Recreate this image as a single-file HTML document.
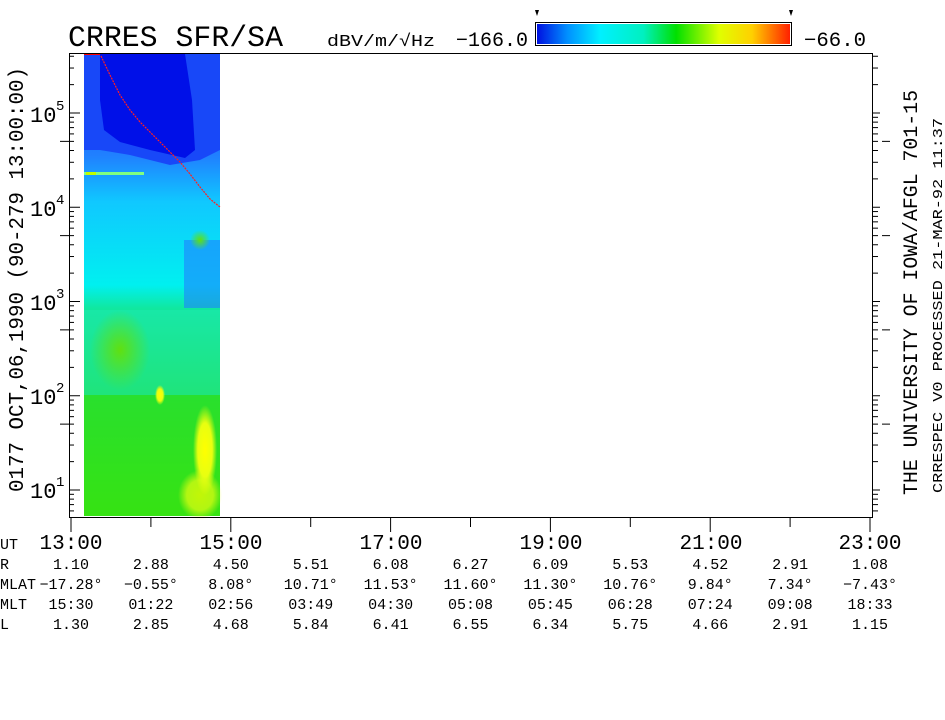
<!DOCTYPE html>
<html><head><meta charset="utf-8"><style>
html,body{margin:0;padding:0;background:#fff;}
svg{display:block;font-family:"Liberation Mono","DejaVu Sans Mono",monospace;}
</style></head><body>
<svg id="s" width="945" height="720" viewBox="0 0 945 720" xmlns="http://www.w3.org/2000/svg">
<defs>
<linearGradient id="cb" x1="0" x2="1" y1="0" y2="0">
<stop offset="0" stop-color="#0010e0"/><stop offset="0.12" stop-color="#0090ff"/><stop offset="0.25" stop-color="#00f0ff"/><stop offset="0.42" stop-color="#00f0c0"/><stop offset="0.55" stop-color="#00e000"/><stop offset="0.72" stop-color="#e0ff00"/><stop offset="0.85" stop-color="#ffd000"/><stop offset="1" stop-color="#ff2000"/>
</linearGradient>
<linearGradient id="sp" x1="0" x2="0" y1="0" y2="1">
<stop offset="0" stop-color="#1040ff"/><stop offset="0.22" stop-color="#2080ff"/><stop offset="0.32" stop-color="#10c8ff"/><stop offset="0.5" stop-color="#00f0f0"/><stop offset="0.55" stop-color="#10e8a0"/><stop offset="0.75" stop-color="#20e040"/><stop offset="1" stop-color="#40e800"/>
</linearGradient>
<radialGradient id="yb"><stop offset="0" stop-color="#ffff00"/><stop offset="0.6" stop-color="#e8ff10"/><stop offset="1" stop-color="#e8ff10" stop-opacity="0"/></radialGradient>
<radialGradient id="gb"><stop offset="0" stop-color="#60e010"/><stop offset="1" stop-color="#60e010" stop-opacity="0"/></radialGradient>
</defs>
<rect x="84" y="54" width="136" height="462" fill="url(#sp)"/>
<rect x="84" y="310" width="136" height="85" fill="#20e8b0" opacity="0.5"/>
<rect x="84" y="395" width="136" height="121" fill="#30e020" opacity="0.6"/>
<path d="M84 54 L220 54 L220 150 L200 160 L170 165 L130 155 L100 150 L84 150 Z" fill="#1848f8"/>
<path d="M100 54 L185 54 L192 100 L195 150 L185 158 L150 150 L120 142 L104 130 L100 100 Z" fill="#0010e8"/>
<rect x="84" y="172" width="60" height="3" fill="#80ff80"/>
<rect x="86" y="172" width="10" height="3" fill="#c0ff00"/>
<rect x="184" y="240" width="36" height="68" fill="#2080ff" opacity="0.6"/>
<ellipse cx="205" cy="450" rx="12" ry="45" fill="url(#yb)"/>
<ellipse cx="200" cy="495" rx="22" ry="25" fill="url(#yb)" opacity="0.7"/>
<ellipse cx="160" cy="395" rx="5" ry="10" fill="url(#yb)"/>
<ellipse cx="120" cy="350" rx="30" ry="40" fill="url(#gb)"/>
<ellipse cx="200" cy="240" rx="10" ry="10" fill="url(#gb)"/>
<polyline points="84,54 100,54" stroke="#ff0000" stroke-width="2"/>
<polyline points="101,56 110,75 120,95 130,110 140,122 150,132 160,142 170,152 180,162 190,174 200,187 210,199 220,207" fill="none" stroke="#ff2020" stroke-width="1.2" stroke-dasharray="2,1"/>
<rect x="69.5" y="53.5" width="803" height="464" fill="none" stroke="#000" stroke-width="1"/>
<g id="ticks" stroke="#000" stroke-width="1"></g>
<text x="68" y="46" font-size="30" textLength="215" lengthAdjust="spacingAndGlyphs">CRRES SFR/SA</text>
<text x="327" y="46" font-size="17" textLength="108" lengthAdjust="spacingAndGlyphs">dBV/m/√Hz</text>
<text x="456" y="46" font-size="20" textLength="72" lengthAdjust="spacingAndGlyphs">−166.0</text>
<text x="804" y="46" font-size="20" textLength="62" lengthAdjust="spacingAndGlyphs">−66.0</text>
<rect x="535.5" y="22.5" width="256" height="23" fill="none" stroke="#000"/>
<rect x="537" y="24" width="253" height="20" fill="url(#cb)"/>
<path d="M535 10 h4 l-2 6 z M789 10 h4 l-2 6 z" fill="#000"/>
<g font-size="22">
<text x="30" y="122">10</text><text x="56" y="110" font-size="14">5</text>
<text x="30" y="216">10</text><text x="56" y="204" font-size="14">4</text>
<text x="30" y="310">10</text><text x="56" y="298" font-size="14">3</text>
<text x="30" y="404">10</text><text x="56" y="392" font-size="14">2</text>
<text x="30" y="498">10</text><text x="56" y="486" font-size="14">1</text>
</g>
<text transform="translate(23,492) rotate(-90)" font-size="21" textLength="425" lengthAdjust="spacingAndGlyphs">0177  OCT,06,1990  (90-279 13:00:00)</text>
<text transform="translate(917,495) rotate(-90)" font-size="20" textLength="405" lengthAdjust="spacingAndGlyphs">THE UNIVERSITY OF IOWA/AFGL 701-15</text>
<text transform="translate(942,493) rotate(-90)" font-size="14" textLength="375" lengthAdjust="spacingAndGlyphs">CRRESPEC V0   PROCESSED 21-MAR-92  11:37</text>
<g font-size="21" text-anchor="middle">
<text x="71" y="549">13:00</text><text x="231" y="549">15:00</text><text x="391" y="549">17:00</text><text x="551" y="549">19:00</text><text x="711" y="549">21:00</text><text x="870" y="549">23:00</text>
</g>
<g font-size="15">
<text x="0" y="549">UT</text><text x="0" y="569">R</text><text x="0" y="589">MLAT</text><text x="0" y="609">MLT</text><text x="0" y="629">L</text>
</g>
<g id="tbl" font-size="15" text-anchor="middle"></g>
</svg>
<script>
var NS="http://www.w3.org/2000/svg";
var t=document.getElementById("ticks");
function ln(x1,y1,x2,y2){var l=document.createElementNS(NS,"line");l.setAttribute("x1",x1);l.setAttribute("y1",y1);l.setAttribute("x2",x2);l.setAttribute("y2",y2);t.appendChild(l);}
function Y(v){return 490-(Math.log10(v)-1)*94.25;}
for(var d=0;d<=5;d++){for(var m=1;m<10;m++){var v=m*Math.pow(10,d);var y=Y(v);if(y<54||y>517)continue;
 var big=(m==1);ln(69.5,y,big?80:74,y);ln(872.5,y,big?880:878,y);
 if(m==5&&d>=1){ln(60,y,69,y);ln(882,y,890,y);}
}}
for(var h=0;h<=10;h++){var x=71+h*79.9;var big=(h%2==0);ln(x,517,x,big?532:527);}
var cols=[["1.10","-17.28°","15:30","1.30"],["2.88","-0.55°","01:22","2.85"],["4.50","8.08°","02:56","4.68"],["5.51","10.71°","03:49","5.84"],["6.08","11.53°","04:30","6.41"],["6.27","11.60°","05:08","6.55"],["6.09","11.30°","05:45","6.34"],["5.53","10.76°","06:28","5.75"],["4.52","9.84°","07:24","4.66"],["2.91","7.34°","09:08","2.91"],["1.08","-7.43°","18:33","1.15"]];
var g=document.getElementById("tbl");
cols.forEach(function(c,i){c.forEach(function(s,j){var e=document.createElementNS(NS,"text");e.setAttribute("x",71+i*79.9);e.setAttribute("y",569+j*20);e.textContent=s.replace("-","−");g.appendChild(e);});});
</script>
</body></html>
